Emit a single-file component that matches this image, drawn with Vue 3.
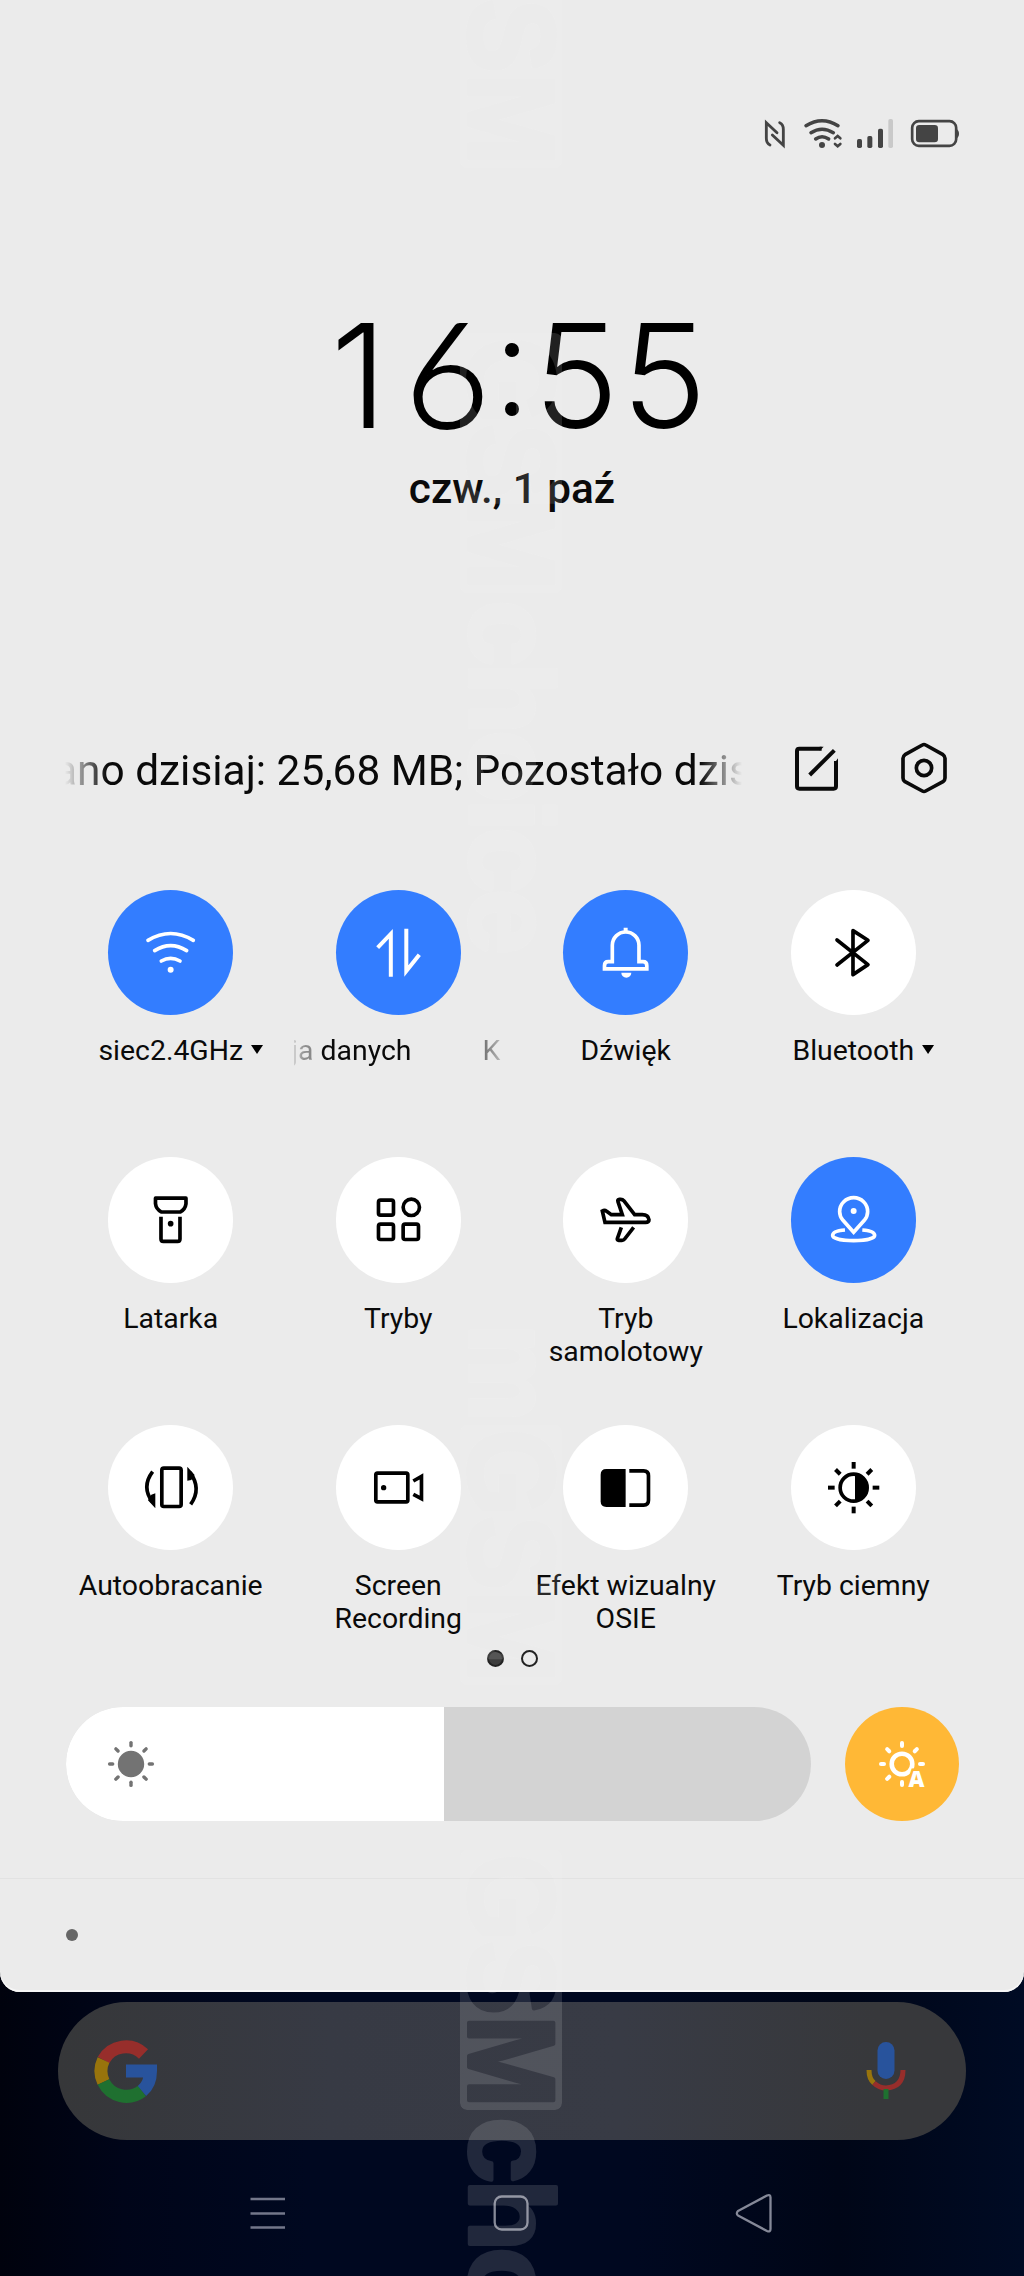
<script setup>
const tiles = [
  { id: 'wifi', label: ['siec2.4GHz'], on: true, menu: true },
  { id: 'data', marquee: ['ja danych', 'K'], on: true },
  { id: 'sound', label: ['Dźwięk'], on: true },
  { id: 'bluetooth', label: ['Bluetooth'], menu: true },
  { id: 'torch', label: ['Latarka'] },
  { id: 'modes', label: ['Tryby'] },
  { id: 'plane', label: ['Tryb', 'samolotowy'] },
  { id: 'location', label: ['Lokalizacja'], on: true },
  { id: 'rotate', label: ['Autoobracanie'] },
  { id: 'record', label: ['Screen', 'Recording'] },
  { id: 'osie', label: ['Efekt wizualny', 'OSIE'] },
  { id: 'dark', label: ['Tryb ciemny'] }
]
const rays = [0, 45, 90, 135, 180, 225, 270, 315]
const autoRays = [0, 45, 90, 180, 225, 270, 315]
// Stamps down the centre of the screen: bottom edge of each box
const stamps = [168, 593, 1685, 2110]
</script>

<template>
  <div class="screen">
    <section class="panel">
      <header class="status">
        <svg width="250" height="90" viewBox="0 0 750 270" fill="none" stroke="#444" stroke-linecap="round">
          <path d="M90 165 Q79 160 79 145 V98 L111 128 M119 98 Q130 103 130 118 V166 L97 135" stroke-width="8.500" />
          <path d="M198 107 Q246 77 294 107 M213 128 Q246 107 280 128 M227 147 Q246 133 266 147" stroke-width="10.500" />
          <circle cx="246" cy="165" r="9" fill="#444" stroke="none" />
          <path d="M285 145 l8 -7 l8 7 M285 162 l8 7 l8 -7" stroke-width="8" />
          <g fill="#444" stroke="none">
            <rect x="351" y="147" width="15" height="27" rx="5" />
            <rect x="382" y="138" width="15" height="36" rx="5" />
            <rect x="414" y="116" width="15" height="58" rx="5" />
            <rect x="445" y="87" width="14" height="87" rx="5" fill="#c9c9c9" />
            <rect x="528" y="105" width="66" height="52" rx="10" />
            <path d="M648 116 Q657 120 657 131 Q657 142 648 146Z" />
          </g>
          <rect x="516.500" y="93.500" width="132" height="74" rx="20" stroke-width="8" />
        </svg>
      </header>

      <div class="clock"><span class="one">1</span><span class="six">6</span><span class="colon"><i></i><i></i></span><span>5</span><span>5</span></div>
      <div class="date">czw., 1 paź</div>

      <div class="usage">
        <div class="usage-text"><span>ano dzisiaj: 25,68 MB; Pozostało dzis</span></div>
        <svg class="edit" width="46" height="50" viewBox="0 0 138 150" fill="none" stroke="#0a0a0a" stroke-width="12">
          <path d="M86 17 H19 Q12 17 12 24 V130 Q12 137 19 137 H122 Q129 137 129 130 V54" />
          <path d="M50 96 L124 22" />
          <path d="M80 11 H92 L80 23Z M135 46 V60 L123 62Z" fill="#0a0a0a" stroke="none" />
        </svg>
        <svg class="gear" width="50" height="52" viewBox="0 0 150 156" fill="none" stroke="#0a0a0a" stroke-width="11">
          <path d="M70 9 Q75 6 80 9 L132 38 Q138 42 138 49 V108 Q138 115 132 119 L80 147 Q75 150 70 147 L18 119 Q12 115 12 108 V49 Q12 42 18 38Z" stroke-linejoin="round" />
          <circle cx="75" cy="78" r="23" />
        </svg>
      </div>

      <main class="grid">
        <div v-for="t in tiles" :key="t.id" class="tile">
          <div class="disc" :class="{ on: t.on }">
            <svg viewBox="-188 -188 376 376" fill="none" stroke="currentColor" stroke-width="11">
              <g v-if="t.id === 'wifi'" stroke-linecap="round">
                <path d="M-68 -37 Q0 -78 68 -37 M-48 -6 Q0 -36 48 -6 M-28 25 Q0 9 28 25" />
                <circle cy="51" r="9" fill="currentColor" stroke="none" />
              </g>
              <g v-else-if="t.id === 'data'" stroke-width="12">
                <path d="M-63 -15 L-23.500 -56 V72 M23 -72 V55 L62 6" />
              </g>
              <g v-else-if="t.id === 'sound'">
                <path d="M-63.500 48.500 V39 Q-63.500 27 -52 27 H-40 V-22 A40 40 0 0 1 40 -22 V27 H52 Q63.500 27 63.500 39 V48.500 Z" />
                <path d="M-6 -75 H6 V-60 H-6Z M-13 60 H17 A15 15 0 0 1 -13 60Z" fill="currentColor" stroke="none" />
              </g>
              <g v-else-if="t.id === 'bluetooth'" stroke-linejoin="round" stroke-linecap="round">
                <path d="M-50 -38 L43 36 L-2 66 V-66 L43 -37 L-50 37" />
              </g>
              <g v-else-if="t.id === 'torch'">
                <path d="M-45.500 -64.500 H46 V-48 Q44 -32 29 -23 H-28 Q-44 -32 -45.500 -48Z" stroke-linejoin="round" />
                <path d="M-29 -9 V58 Q-29 65 -22 65 H21 Q28 65 28 58 V-9" />
                <circle cy="12" r="8.500" fill="currentColor" stroke="none" />
              </g>
              <g v-else-if="t.id === 'modes'">
                <rect x="-60.500" y="-58.500" width="45" height="45" rx="6" />
                <rect x="-60.500" y="13.500" width="45" height="46" rx="6" />
                <rect x="13.500" y="13.500" width="46" height="46" rx="6" />
                <circle cx="38" cy="-37" r="24.500" />
              </g>
              <g v-else-if="t.id === 'plane'">
                <path d="M-70 -26 L-62 8 H60 Q70 8 70 0 Q68 -15 50 -15 H27 L-5 -56 Q-9 -61 -15 -61 H-19 Q-25 -61 -23 -54 L-10 -15 H-43 L-57 -25 Q-63 -30 -70 -26Z" />
                <path d="M-13 23 L-25 57 Q-26 62 -21 62 H-11 Q-6 62 -3 58 L24 23" />
              </g>
              <g v-else-if="t.id === 'location'">
                <path d="M0 38 L-32 2 Q-42 -10 -42 -24 A42 42 0 0 1 42 -24 Q42 -10 32 2Z" />
                <circle cy="-26" r="9" fill="currentColor" stroke="none" />
                <path d="M-26 31 Q-63 34 -63 47 C-63 57 -35 63 0 63 S63 57 63 47 Q63 34 26 31" />
              </g>
              <g v-else-if="t.id === 'rotate'">
                <rect x="-26.500" y="-58.500" width="58" height="115" rx="6" />
                <path d="M-54 -48 Q-89 -2 -54 44 M60 50 Q94 3 58 -46" />
                <path d="M-58 21 L-46 17 V62 L-68 38Z M50 -63 V-21 L62 -23 L72 -38Z" fill="currentColor" stroke="none" />
              </g>
              <g v-else-if="t.id === 'record'">
                <rect x="-68.500" y="-43.500" width="96" height="86" rx="5" />
                <circle cx="-45" r="8" fill="currentColor" stroke="none" />
                <path d="M44 -20 L68.500 -34 V33 L44 20" />
              </g>
              <g v-else-if="t.id === 'osie'">
                <path d="M0 -56 H-58 Q-75 -56 -75 -39 V41 Q-75 58 -58 58 H0Z" fill="currentColor" stroke="none" />
                <path d="M11 -50.500 H54 Q68.500 -50.500 68.500 -36 V38 Q68.500 52.500 54 52.500 H11" />
              </g>
              <g v-else>
                <circle r="40.500" />
                <path d="M4 -40 A40 40 0 0 1 4 40Z" fill="currentColor" stroke="none" />
                <path v-for="r in rays" :key="r" d="M0 -57 V-77" :transform="`rotate(${r})`" stroke-width="12" />
              </g>
            </svg>
          </div>
          <div v-if="t.marquee" class="marquee"><span>{{ t.marquee[0] }}</span><span>{{ t.marquee[1] }}</span></div>
          <div v-else class="label" :class="{ menu: t.menu }">
            <span v-for="line in t.label" :key="line">{{ line }}</span>
            <b v-if="t.menu" class="caret"></b>
          </div>
        </div>
      </main>

      <div class="pages"><i class="active"></i><i></i></div>

      <div class="brightness">
        <div class="slider">
          <div class="fill">
            <svg width="50" height="50" viewBox="-25 -25 50 50" stroke="#737373" stroke-width="3.400" stroke-linecap="round">
              <circle r="13.200" fill="#737373" stroke="none" />
              <path v-for="r in rays" :key="r" d="M0 -18.300 V-21.400" :transform="`rotate(${r})`" />
            </svg>
          </div>
        </div>
        <div class="auto">
          <svg width="54" height="54" viewBox="-27 -27 54 54" stroke="#fff" stroke-width="4" stroke-linecap="round" fill="none">
            <circle r="10.300" stroke-width="4.600" />
            <path v-for="r in autoRays" :key="r" d="M0 -18 V-21" :transform="`rotate(${r})`" />
            <text x="14.500" y="23" text-anchor="middle" stroke="#ffb836" stroke-width="5" paint-order="stroke" fill="#fff">A</text>
          </svg>
        </div>
      </div>

      <footer class="notice"><i></i></footer>
    </section>

    <div class="search">
      <svg width="64" height="66" viewBox="0 0 64 66" fill="none" stroke-width="13">
        <path d="M49.500 16 A25.500 25.500 0 0 0 9.500 22" stroke="#972e2b" />
        <path d="M9.500 22 A25.500 25.500 0 0 0 9.500 44" stroke="#98740c" />
        <path d="M9.500 44 A25.500 25.500 0 0 0 48 53" stroke="#1f7030" />
        <path d="M48 53 Q56.500 46 56.500 33 H32" stroke="#28539c" />
      </svg>
      <svg width="40" height="60" viewBox="0 0 40 60" fill="none" stroke-width="5">
        <rect x="11.500" y="1" width="17" height="37" rx="8.500" fill="#28539c" />
        <path d="M3 29 Q3 38 8 42" stroke="#98740c" />
        <path d="M8 42 Q13 47 20 47 Q37 46 37 29" stroke="#972e2b" />
        <path d="M20 48 V58" stroke="#1f7030" />
      </svg>
    </div>

    <nav class="nav">
      <svg width="36" height="40" viewBox="0 0 36 40" stroke="#73778a" stroke-width="2.600"><path d="M.5 6 H35 M.5 20.500 H35 M.5 34.500 H35" /></svg>
      <svg width="36" height="40" viewBox="0 0 36 40" stroke="#858998" stroke-width="2.300" fill="none"><rect x="1.700" y="3.500" width="32.800" height="33" rx="7" /></svg>
      <svg width="38" height="40" viewBox="0 0 38 40" stroke="#858998" stroke-width="2.300" fill="none"><path d="M3 22.500 Q.7 20.500 3 18 L32 2.500 Q35.500 1 35.500 4.500 V36 Q35.500 39.500 32 38Z" stroke-linejoin="round" /></svg>
    </nav>

    <svg class="stamp" width="120" height="2276" viewBox="0 0 120 2276">
      <defs>
        <mask id="cutout" maskUnits="userSpaceOnUse" x="-2" y="-2" width="264" height="106">
          <rect width="260" height="102" rx="7" fill="#fff" />
          <text x="4" y="93" textLength="254" lengthAdjust="spacingAndGlyphs" fill="#000" stroke="#000" stroke-width="4" stroke-linejoin="round">GSM</text>
        </mask>
      </defs>
      <g v-for="y in stamps" :key="y" :transform="`translate(112 ${y - 260}) rotate(90)`" fill="#f9f9f9">
        <rect width="260" height="102" rx="7" mask="url(#cutout)" />
        <text v-if="y === 593 || y === 2110" class="bold" x="267" y="92" textLength="355">choice</text>
        <text v-if="y === 1685" class="bold" x="-101" y="92" textLength="98" lengthAdjust="spacingAndGlyphs">m</text>
      </g>
    </svg>
  </div>
</template>

<style>
body { margin: 0; background: #00061c; }
</style>

<style scoped>
.screen {
  position: relative;
  width: 1024px;
  height: 2276px;
  overflow: hidden;
  display: flex;
  flex-direction: column;
  font-family: Roboto, "Noto Sans", sans-serif;
  color: #0a0a0a;
  background: linear-gradient(90deg, #00020d 0, #000519 12%, #000820 30%, #000820 62%, #000617 82%, #000b24 100%);
}
svg { display: block; flex: none; }
.panel {
  height: 1992px;
  flex: none;
  background: #ebebeb;
  border-radius: 0 0 20px 20px;
  box-shadow: inset 0 -2px 0 #f6f6f6;
  display: flex;
  flex-direction: column;
}
.status { height: 180px; box-sizing: border-box; padding: 90px 34px 0 0; display: flex; justify-content: flex-end; flex: none; }
.clock {
  height: 270px;
  padding: 120px 0 0 315px;
  box-sizing: border-box;
  display: flex;
  align-items: baseline;
  flex: none;
  font: 300 144.5px/144px Inter, sans-serif;
  color: #000;
}
.clock span { width: 88px; text-align: center; }
.clock .six { font-family: Lato, sans-serif; font-size: 146px; -webkit-text-stroke: 2.2px #000; }
.clock .colon { align-self: flex-start; width: 41px; height: 144px; display: flex; flex-direction: column; align-items: center; gap: 44.5px; padding-top: 43px; box-sizing: border-box; }
.colon i { flex: none; width: 14px; height: 14px; border-radius: 50%; background: #000; }
.date { height: 267px; padding-top: 14px; box-sizing: border-box; flex: none; text-align: center; font-weight: 500; font-size: 42.3px; line-height: 50px; }
.usage { height: 173px; box-sizing: border-box; padding: 23px 0 0 65px; display: flex; flex: none; }
.usage-text {
  width: 677px;
  height: 62px;
  overflow: hidden;
  white-space: nowrap;
  font-size: 42.4px;
  line-height: 62px;
  -webkit-mask-image: linear-gradient(90deg, transparent, #000 42px, #000 calc(100% - 42px), transparent);
  mask-image: linear-gradient(90deg, transparent, #000 42px, #000 calc(100% - 42px), transparent);
}
.usage-text span { margin-left: -11px; }
.edit { margin: 3px 0 0 51px; }
.gear { margin: 2px 0 0 60px; }
.grid {
  height: 755px;
  flex: none;
  padding: 0 57px;
  display: grid;
  grid-template-columns: repeat(4, 227.5px);
  grid-auto-rows: 267.3px;
}
.tile { display: flex; flex-direction: column; align-items: center; }
.disc { width: 125.3px; height: 125.3px; border-radius: 50%; background: #fff; color: #000; flex: none; }
.disc svg { width: 100%; height: 100%; }
.disc.on { background: #337dff; color: #fff; }
.label, .marquee { margin-top: 19px; font-size: 28.4px; line-height: 33.3px; white-space: nowrap; }
.label { display: flex; flex-direction: column; align-items: center; }
.label.menu { flex-direction: row; gap: 8px; margin-left: 20px; }
.caret { width: 12px; height: 9px; background: #000; clip-path: polygon(0 0, 100% 0, 50% 100%); margin-top: -3px; }
.marquee {
  width: 208px;
  overflow: hidden;
  display: flex;
  gap: 71px;
  -webkit-mask-image: linear-gradient(90deg, #0002, #0006 10px, #0007 24px, #000 27px, #000 180px, #0008 190px, #0003);
  mask-image: linear-gradient(90deg, #0002, #0006 10px, #0007 24px, #000 27px, #000 180px, #0008 190px, #0003);
}
.marquee span:first-child { margin-left: -3px; }
.pages { height: 62px; box-sizing: border-box; padding-top: 4.500px; flex: none; display: flex; justify-content: center; gap: 17px; }
.pages i { width: 17px; height: 17px; box-sizing: border-box; border: 2px solid #222; border-radius: 50%; }
.pages .active { background: #3d3d3d; }
.brightness { height: 171px; flex: none; padding: 0 65px 0 66px; display: flex; justify-content: space-between; border-bottom: 1px solid #e2e2e2; }
.slider { width: 745px; height: 114px; border-radius: 57px; background: #d3d3d3; overflow: hidden; }
.fill { width: 378px; height: 114px; background: #fff; display: flex; align-items: center; padding-left: 40px; box-sizing: border-box; }
.auto { width: 114px; height: 114px; border-radius: 50%; background: #ffb836; display: flex; align-items: center; justify-content: center; }
.auto text { font: 800 22px "Open Sans", sans-serif; }
.notice { padding: 50px 0 0 66px; }
.notice i { display: block; width: 12px; height: 12px; border-radius: 50%; background: #666; }
.search {
  margin: 10px 58px 0;
  height: 138px;
  flex: none;
  border-radius: 69px;
  background: linear-gradient(90deg, #363739, #373a44 30%, #383b45 62%, #37383b 90%);
  display: flex;
  align-items: center;
  justify-content: space-between;
  padding: 0 60px 0 36px;
  box-sizing: border-box;
}
.nav { display: flex; justify-content: space-between; padding: 53px 251px 0 250px; }
.stamp { position: absolute; left: 450px; top: 0; opacity: .13; pointer-events: none; }
.stamp text { font: 700 122px "Liberation Sans", Arial, sans-serif; }
.stamp .bold { font-size: 119px; stroke: #f9f9f9; stroke-width: 4px; stroke-linejoin: round; }
</style>
